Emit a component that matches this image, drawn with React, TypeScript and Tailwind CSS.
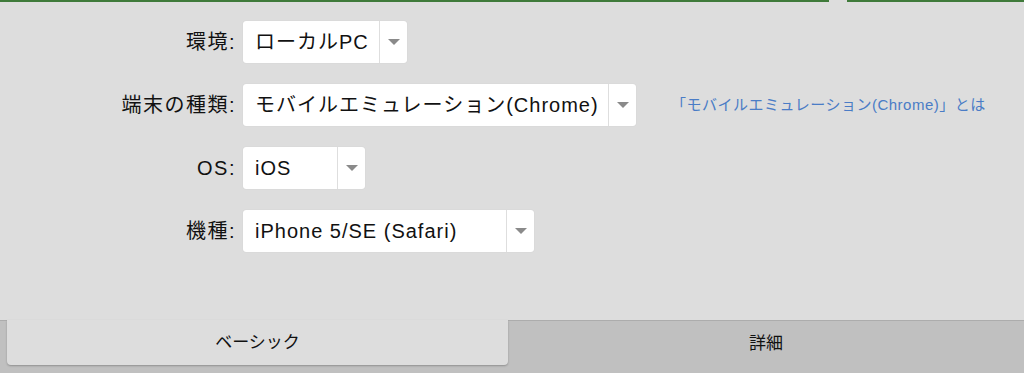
const font = { fontFamily: '"Liberation Sans", "Noto Sans CJK JP", sans-serif' };

type Row = {
    label: string;
    value: string;
    width: string;
    link?: string;
};

const rows: Row[] = [
    { label: '環境:', value: 'ローカルPC', width: 'w-[164px]' },
    {
        label: '端末の種類:',
        value: 'モバイルエミュレーション(Chrome)',
        width: 'w-[393px]',
        link: '「モバイルエミュレーション(Chrome)」とは',
    },
    { label: 'OS:', value: 'iOS', width: 'w-[122px]' },
    { label: '機種:', value: 'iPhone 5/SE (Safari)', width: 'w-[291px]' },
];

function Select({ value, width }: { value: string; width: string }) {
    return (
        <div className={`${width} h-[42px] flex bg-white rounded-[3px] shadow-[0_0_1px_rgba(0,0,0,0.15)]`}>
            <div className="flex-1 flex items-center pl-3 text-[20px] text-[#111] tracking-[1px] whitespace-nowrap overflow-hidden">
                {value}
            </div>
            <div className="w-[28px] flex items-center justify-center border-l border-[#dedede]">
                <div className="w-0 h-0 border-l-[6px] border-r-[6px] border-t-[6px] border-l-transparent border-r-transparent border-t-[#8a8a8a]" />
            </div>
        </div>
    );
}

export default function App() {
    return (
        <div className="w-[1024px] h-[373px] bg-[#dddddd] flex flex-col overflow-hidden" style={font}>
            <div className="flex h-[2px]">
                <div className="w-[829px] bg-[#3f7a3a]" />
                <div className="w-[18px]" />
                <div className="flex-1 bg-[#3f7a3a]" />
            </div>
            <div className="flex flex-col gap-[21px] pt-[19px]">
                {rows.map((r) => (
                    <div key={r.label} className="flex items-center">
                        <div className="w-[236px] text-right text-[20px] text-[#111] tracking-[1.5px]">{r.label}</div>
                        <div className="ml-[7px]">
                            <Select value={r.value} width={r.width} />
                        </div>
                        {r.link && (
                            <a className="ml-[35px] text-[15px] text-[#4a7cc6] tracking-[0.5px] whitespace-nowrap">{r.link}</a>
                        )}
                    </div>
                ))}
            </div>
            <div className="mt-auto h-[53px] bg-[#c0c0c0] border-t border-[#acacac] flex">
                <div className="ml-[7px] -mt-[1px] w-[501px] h-[45px] bg-[#dddddd] rounded-b-[4px] shadow-[0_1px_2px_rgba(0,0,0,0.25)] flex items-center justify-center text-[17px] text-[#111]">
                    ベーシック
                </div>
                <div className="flex-1 h-[45px] flex items-center justify-center text-[17px] text-[#111]">
                    詳細
                </div>
            </div>
        </div>
    );
}
